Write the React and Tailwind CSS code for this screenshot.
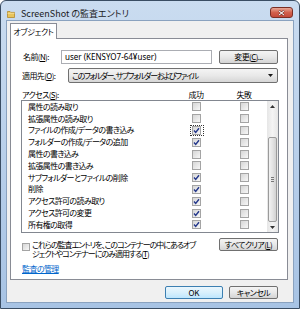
const rows = [
  ['属性の読み取り', false],
  ['拡張属性の読み取り', false],
  ['ファイルの作成/データの書き込み', true, true],
  ['フォルダーの作成/データの追加', true],
  ['属性の書き込み', false],
  ['拡張属性の書き込み', false],
  ['サブフォルダーとファイルの削除', true],
  ['削除', true],
  ['アクセス許可の読み取り', true],
  ['アクセス許可の変更', true],
  ['所有権の取得', true],
];

function Box({ checked }) {
  return (
    <div className="w-[9px] h-[9px] border border-[#a4a4a4] bg-gradient-to-br from-[#d6d6d6] to-[#f7f7f7] flex items-center justify-center">
      {checked && (
        <svg width="7" height="7" viewBox="0 0 7 7">
          <path d="M1 3.6 L2.7 5.4 L6 1.2" stroke="#22368a" strokeWidth="1.4" fill="none" />
        </svg>
      )}
    </div>
  );
}

function Btn({ children, className = '' }) {
  return (
    <div
      className={`h-[13px] rounded-[2px] border border-[#707070] bg-gradient-to-b from-[#f4f4f4] via-[#e8e8e8] to-[#d4d4d4] flex items-center justify-center ${className}`}
    >
      {children}
    </div>
  );
}

function FolderIcon() {
  return (
    <svg width="8" height="8" viewBox="0 0 8 8">
      <path d="M0.5 1.5 H3 L3.8 2.4 H7.5 V7.5 H0.5 Z" fill="#e9c55c" stroke="#b28a2c" strokeWidth="0.8" />
      <path d="M0.5 3.3 H7.5" stroke="#f7e3a0" strokeWidth="0.8" />
    </svg>
  );
}

export default function App() {
  return (
    <div className="w-[300px] h-[309px] flex flex-col rounded-t-[6px] border border-[#3a4d63] bg-gradient-to-b from-[#cadcf0] to-[#a7c3e4] text-[8px] leading-none text-black font-['Noto_Sans_CJK_JP','Noto_Sans',sans-serif] [font-feature-settings:'palt'] tracking-[-0.6px] overflow-hidden">
      {/* title bar */}
      <div className="h-[19px] flex items-start pl-[6px] pr-[6px]">
        <div className="mt-[9px]">
          <FolderIcon />
        </div>
        <span className="ml-[6px] mt-[8px] text-[9px] tracking-normal text-[#1a1a1a]">ScreenShot の監査エントリ</span>
        <div className="ml-auto mt-[6px] w-[23px] h-[11px] rounded-[3px] border border-[#7a2e24] bg-gradient-to-b from-[#e6a797] via-[#d2604c] to-[#c4493a] flex items-center justify-center">
          <svg width="7" height="6" viewBox="0 0 7 6">
            <path d="M1 0.8 L6 5.2 M6 0.8 L1 5.2" stroke="#5a1a12" strokeWidth="2" />
            <path d="M1 0.8 L6 5.2 M6 0.8 L1 5.2" stroke="#ffffff" strokeWidth="1.1" />
          </svg>
        </div>
      </div>

      {/* client */}
      <div className="mx-[5px] h-[283px] bg-[#f0f0f0] border border-[#8aa2bf] flex flex-col">
        {/* tab strip */}
        <div className="mt-[2px] ml-[3px] flex">
          <div className="relative z-10 -mb-px h-[16px] w-[47px] bg-white border border-b-0 border-[#898c95] flex items-center justify-center">
            <span className="tracking-[-0.3px]">オブジェクト</span>
          </div>
        </div>
        {/* panel */}
        <div className="ml-[3px] w-[278px] h-[242px] bg-white border border-[#898c95] flex flex-col pl-[11px] pr-[9px]">
          {/* name row */}
          <div className="mt-[11px] h-[14px] flex items-center">
            <span className="w-[39px] pl-[1px]">名前(<span className="underline">N</span>):</span>
            <div className="w-[151px] h-[14px] border border-[#abadb3] bg-white flex items-center pl-[3px] font-['Noto_Sans',sans-serif] text-[8px] tracking-normal">
              user (KENSYO7-64¥user)
            </div>
            <Btn className="ml-auto w-[59px] h-[14px]">変更(<span className="underline">C</span>)...</Btn>
          </div>
          {/* apply row */}
          <div className="mt-[4px] h-[15px] flex items-center">
            <span className="w-[46px]">適用先(<span className="underline">O</span>):</span>
            <div className="flex-1 h-[15px] rounded-[2px] border border-[#707070] bg-gradient-to-b from-[#f4f4f4] via-[#e9e9e9] to-[#d6d6d6] flex items-center pl-[3px] pr-[4px]">
              <span className="tracking-[-1.3px]">このフォルダー、サブフォルダーおよびファイル</span>
              <svg className="ml-auto" width="5" height="3" viewBox="0 0 5 3">
                <path d="M0 0 H5 L2.5 3 Z" fill="#1a1a1a" />
              </svg>
            </div>
          </div>
          {/* access header */}
          <div className="mt-[7px] h-[10px] flex items-center">
            <span className="w-[158px]">アクセス(<span className="underline">S</span>):</span>
            <span className="w-[32px] text-center">成功</span>
            <span className="w-[16px]" />
            <span className="w-[32px] text-center">失敗</span>
          </div>
          {/* list */}
          <div className="-ml-px w-[258px] h-[133px] border border-[#828790] bg-white flex">
            <div className="w-[244px] flex flex-col">
              {rows.map(([label, ok, focus], i) => (
                <div key={i} className="h-[11.8px] flex items-center">
                  <span className="w-[158px] pl-[6px] whitespace-nowrap">{label}</span>
                  <div className="w-[32px] flex justify-center">
                    <div className="relative">
                      <Box checked={ok} />
                      {focus && (
                        <div className="absolute -left-[2px] -right-[3px] -top-[1px] -bottom-[1px] border border-dotted border-[#333]" />
                      )}
                    </div>
                  </div>
                  <div className="w-[16px]" />
                  <div className="w-[32px] flex justify-center">
                    <Box checked={false} />
                  </div>
                </div>
              ))}
            </div>
            {/* scrollbar */}
            <div className="ml-auto w-[11px] bg-gradient-to-r from-[#e6e6e6] via-[#f4f4f4] to-[#e6e6e6] flex flex-col">
              <div className="h-[10px] flex items-center justify-center">
                <svg width="5" height="3" viewBox="0 0 5 3">
                  <path d="M0 3 H5 L2.5 0 Z" fill="#333" />
                </svg>
              </div>
              <div className="mt-[26px] h-[85px] mx-[1px] rounded-[2px] border border-[#9b9b9b] bg-gradient-to-r from-[#f2f2f2] via-[#e4e4e4] to-[#d2d2d2] flex flex-col items-center justify-center gap-[1px]">
                <div className="w-[3px] h-px bg-[#777]" />
                <div className="w-[3px] h-px bg-[#777]" />
                <div className="w-[3px] h-px bg-[#777]" />
              </div>
              <div className="mt-auto h-[10px] flex items-center justify-center">
                <svg width="5" height="3" viewBox="0 0 5 3">
                  <path d="M0 0 H5 L2.5 3 Z" fill="#333" />
                </svg>
              </div>
            </div>
          </div>
          {/* inherit checkbox row */}
          <div className="mt-[5px] flex items-start">
            <div className="mt-[5px]">
              <div className="w-[8px] h-[8px] border border-[#a4a4a4] bg-gradient-to-br from-[#d6d6d6] to-[#f7f7f7]" />
            </div>
            <div className="ml-[2px] mt-[2px] leading-[9px] whitespace-nowrap tracking-[-1px]">
              これらの監査エントリを、このコンテナーの中にあるオブ
              <br />
              ジェクトやコンテナーにのみ適用する(<span className="underline">T</span>)
            </div>
            <Btn className="ml-auto w-[59px]">すべてクリア(<span className="underline">L</span>)</Btn>
          </div>
          {/* link */}
          <div className="mt-[7px]">
            <span className="text-[#0066cc] underline">監査の管理</span>
          </div>
        </div>
        {/* bottom buttons */}
        <div className="mt-[6px] flex justify-end pr-[15px] gap-[6px]">
          <div className="w-[58px] h-[13px] rounded-[2px] border border-[#3c7fb1] bg-gradient-to-b from-[#eaf6fd] via-[#d9f0fc] to-[#bee6fd] flex items-center justify-center tracking-normal">
            OK
          </div>
          <Btn className="w-[49px]">キャンセル</Btn>
        </div>
      </div>
    </div>
  );
}
